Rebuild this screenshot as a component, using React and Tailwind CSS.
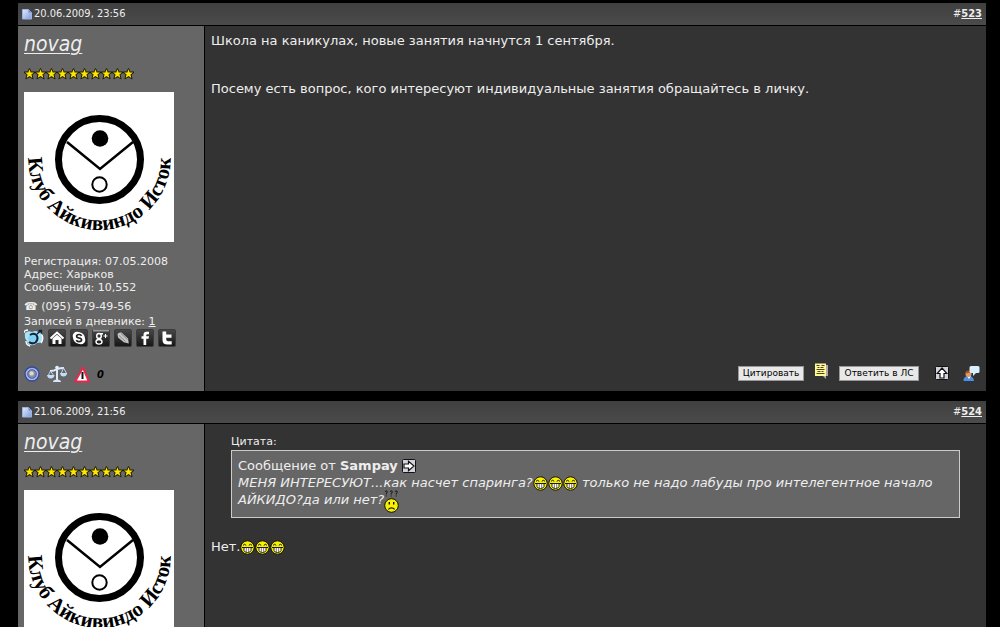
import React, { useId } from 'react';

const STARS = [0, 1, 2, 3, 4, 5, 6, 7, 8, 9];

function PageIcon() {
  const fill = useId();
  return (
    <svg width="10" height="12" viewBox="0 0 10 12" aria-hidden="true">
      <defs>
        <linearGradient id={fill} x1="0" y1="0" x2="1" y2="1">
          <stop offset="0" stopColor="#e4ecfc" />
          <stop offset="1" stopColor="#7f9bd8" />
        </linearGradient>
      </defs>
      <path d="M.5 1.500h6l3 3v6.500h-9z" fill={`url(#${fill})`} stroke="#9db2e4" />
      <path d="M6.500 1.500v3h3z" fill="#6d88cc" />
    </svg>
  );
}

function Star() {
  return (
    <svg width="11" height="12" viewBox="0 0 11 12" aria-hidden="true">
      <path d="M5.500.8L6.900 4.200h3.700L7.800 6.600l1.100 4L5.500 8.400l-3.400 2.200 1.100-4L.4 4.200h3.700z" fill="#1c1a00" stroke="#1c1a00" strokeWidth="1.200" strokeLinejoin="round" />
      <path d="M5.500 1.200L6.700 4.500h3.300L7.400 6.500l1 3.400L5.500 8 2.600 9.900l1-3.400L1 4.500h3.300z" fill="#ffe600" />
    </svg>
  );
}

function Avatar() {
  const arc = useId();
  return (
    <svg width="150" height="150" viewBox="0 0 150 150" className="overflow-visible bg-white" role="img" aria-label="Клуб Айкивиндо Исток">
      <circle cx="75.500" cy="67.500" r="41" fill="none" stroke="#000" strokeWidth="7" />
      <path d="M43 50l33 27 33-27" fill="none" stroke="#000" strokeWidth="2.500" />
      <circle cx="76" cy="46.500" r="8.300" />
      <circle cx="75.500" cy="92.500" r="7.200" fill="#fff" stroke="#000" strokeWidth="2" />
      <path id={arc} d="M4.500 67A71 71 0 0 0 146.500 67" fill="none" />
      <text fontFamily="Liberation Serif, serif" fontWeight="700" fontSize="21" fill="#000">
        <textPath href={`#${arc}`} startOffset="50%" textAnchor="middle">Клуб Айкивиндо Исток</textPath>
      </text>
    </svg>
  );
}

function GrinIcon() {
  return (
    <svg width="15" height="15" viewBox="0 0 15 15" className="inline-block align-[-4px]" role="img" aria-label="смех">
      <circle cx="7.500" cy="7.500" r="6.700" fill="#f8f000" stroke="#111" />
      <path d="M3 5.300q1.500-2 3.200 0M8.800 5.300q1.500-2 3.200 0" fill="none" stroke="#111" />
      <path d="M2 7.500h11" stroke="#111" />
      <path d="M4 7.500h7v3q-.6 2-3.500 2T4 10.500z" fill="#fff" stroke="#111" strokeWidth=".9" />
      <path d="M6.300 8v4M8.700 8v4" stroke="#555" strokeWidth=".8" />
    </svg>
  );
}

function PuzzledIcon() {
  return (
    <svg width="15" height="23" viewBox="0 0 15 23" className="-mt-2 inline-block align-[-9px]" role="img" aria-label="недоумение">
      <circle cx="7.500" cy="15.500" r="6.800" fill="#f8f000" stroke="#111" />
      <path d="M5.300 12v2.500M9.700 12v2.500" stroke="#111" strokeWidth="1.400" />
      <path d="M4.300 19.300q3.200-3 6.400 0" fill="none" stroke="#111" strokeWidth="1.100" />
      <path d="M1 1.500q2-1.500 2.300.4Q3.300 3 2.200 3.500v1M6 1.500q2-1.500 2.300.4Q8.300 3 7.200 3.500v1M11 1.500q2-1.500 2.300.4Q13.300 3 12.200 3.500v1M2.200 5.500v1M7.200 5.500v1M12.200 5.500v1" fill="none" stroke="#111" strokeWidth="1" />
    </svg>
  );
}

function ArrowBox({ up }) {
  return (
    <svg width="14" height="14" viewBox="0 0 14 14" className="inline-block align-[-3px]" aria-hidden="true">
      <rect x=".5" y=".5" width="13" height="13" rx="1" fill="#d2d2dc" stroke="#111" />
      <path d="M2 5h4.500V2.200L12 7l-5.500 4.800V9H2z" fill="#fff" stroke="#111" strokeWidth="1.200" transform={up ? 'rotate(-90 7 7)' : undefined} />
    </svg>
  );
}

function BirdIcon() {
  return (
    <svg width="20" height="18" viewBox="0 0 20 18" aria-hidden="true">
      <path d="M1 4q3-3 7-1 4-2 6 0l4 2q2 5 0 8-3 1-5 1-3 3-7 2-3-1-3-4-3-3-2-8z" fill="#a6e2f8" />
      <path d="M0 4q0-3 4-3M2 12q0 4 4 5M18 6q2 4-1 8" fill="none" stroke="#fff" strokeWidth="1.300" />
      <circle cx="9" cy="9.500" r="4.700" fill="#83d0f2" />
      <path d="M6 6q3-2.500 6.500 0 2.500 4-1 7.500Q8 15.500 5 13" fill="none" stroke="#102338" strokeWidth="2" />
      <path d="M13 5l4-3.500M14.500 1.500h3v3" fill="none" stroke="#16202c" strokeWidth="1.300" />
    </svg>
  );
}

function Tile({ children }) {
  const fill = useId();
  return (
    <svg width="18" height="18" viewBox="0 0 18 18" aria-hidden="true">
      <defs>
        <linearGradient id={fill} x1="0" y1="0" x2="0" y2="1">
          <stop offset="0" stopColor="#484848" />
          <stop offset="1" stopColor="#151515" />
        </linearGradient>
      </defs>
      <rect x=".5" y=".5" width="17" height="17" rx="1.500" fill={`url(#${fill})`} stroke="#3c3c3c" />
      {children}
    </svg>
  );
}

const CONTACTS = [
  { name: 'Дневник', icon: <BirdIcon /> },
  { name: 'Домашняя страница', icon: <Tile><path d="M2.500 9.500L9 3.500l6.500 6" fill="none" stroke="#fff" strokeWidth="2" /><path d="M4.500 9.500L9 5.800l4.500 3.700V15h-3v-4h-3v4h-3z" fill="#fff" /></Tile> },
  { name: 'Skype', icon: <Tile><circle cx="7" cy="7" r="4.300" fill="#fff" /><circle cx="11" cy="11" r="4.300" fill="#fff" /><circle cx="9" cy="9" r="5.800" fill="#fff" /><path d="M11.600 6.900Q11 5.500 9 5.500 6.600 5.500 6.600 7.200 6.600 8.600 9 9q2.600.4 2.600 2Q11.600 12.600 9 12.600q-2 0-2.700-1.500" fill="none" stroke="#222" strokeWidth="1.600" /></Tile> },
  { name: 'Google+', icon: <Tile><path d="M1 1.500h16" stroke="#999" strokeWidth="2" /><g fill="none" stroke="#fff" strokeWidth="1.400"><ellipse cx="7" cy="7" rx="2.300" ry="2.500" /><ellipse cx="7" cy="12.800" rx="3" ry="2.300" /><path d="M8 4.700h3M7 9.500l1.500 1.300" /><path d="M11.500 7h4M13.500 5v4" strokeWidth="1" /></g></Tile> },
  { name: 'Блог', icon: <Tile><path d="M3.500 5q1-2 4-1.500l6.500 6 .8 5-5-1.200L4 8.500z" fill="#c4c4c4" /><path d="M5 6.500l6.500 6M7 4.500l6.500 6" stroke="#858585" strokeWidth=".9" /></Tile> },
  { name: 'Facebook', icon: <Tile><path d="M7.500 16V9.800H5.500V7.200h2V5.800Q7.500 2.800 10.500 2.800h2.500v2.500h-1.600q-1.200 0-1.200 1v.9H13l-.4 2.600h-2.400V16z" fill="#fff" /></Tile> },
  { name: 'Twitter', icon: <Tile><path d="M4.500 2.500h3.700V5.500h5.300v3.200H8.200v1.500q0 2 2 2h3.500v3.300H9.500q-5 0-5-4.500z" fill="#fff" /></Tile> },
];

const STATUS = [
  { name: 'Не в сети', icon: (
    <svg width="16" height="16" viewBox="0 0 16 16">
      <circle cx="8" cy="8" r="7" fill="#a4b5e8" stroke="#35489b" strokeWidth="1.300" />
      <circle cx="8" cy="8" r="4.300" fill="#8b8f9a" stroke="#4a5eae" />
      <circle cx="7.600" cy="7.400" r="2.200" fill="#d9d9d5" />
    </svg>) },
  { name: 'Репутация', icon: (
    <svg width="20" height="18" viewBox="0 0 20 18">
      <path d="M10 2v13M3 6q4 0 7-2 3-1 7-1" fill="none" stroke="#dcecff" strokeWidth="2" />
      <path d="M3.500 6L1 11h6zM16.500 3L14 9h6z" fill="none" stroke="#c2d6ed" />
      <path d="M0 10h7.500q-.5 3.500-3.700 3.500T0 10zM13 8h7q-.5 3.500-3.500 3.500T13 8z" fill="#c4dcfa" />
      <path d="M6 17q0-2.500 4-2.500t4 2.500z" fill="#d5e6fb" />
      <circle cx="10" cy="2.500" r="1.800" fill="#e4efff" />
    </svg>) },
  { name: 'Нарушение', icon: (
    <svg width="16" height="17" viewBox="0 0 16 17">
      <path d="M9 1.500L14.800 15.500H1.200z" fill="#fff" stroke="#e8274a" strokeWidth="2" strokeLinejoin="round" />
      <path d="M8.500 6v7" stroke="#111" strokeWidth="2" />
    </svg>) },
];

function QuoteNoteIcon() {
  return (
    <svg width="15" height="16" viewBox="0 0 15 16" aria-hidden="true">
      <path d="M4 2h10v11h-2v3l-3-3H4z" fill="#aaa" />
      <path d="M1 .5h11v12.500H1z" fill="#fff79a" />
      <path d="M2.500 2.500h3M7.500 2.500h3M3.500 4.500h2M6.500 4.500h3M2.500 6.500h8M3.500 8.500h3M7.500 8.500h2M2.500 10.500h8" stroke="#4a4618" strokeWidth="1" />
    </svg>
  );
}

function UserTalkIcon() {
  return (
    <svg width="17" height="17" viewBox="0 0 17 17" aria-hidden="true">
      <path d="M.5 16q0-5 5-5t5.500 5z" fill="#4a90e8" />
      <path d="M4 11l2 3 2-3z" fill="#fff" />
      <circle cx="5.500" cy="9" r="3" fill="#e79a57" />
      <path d="M2.500 8.500q0-3 3-3t3 2z" fill="#a7531e" />
      <path d="M8 1h7q1.500 0 1.500 1.500v4Q16.500 8 15 8h-2l-3 3V8H8Q6.500 8 6.500 6.500v-4Q6.500 1 8 1z" fill="#d8effd" />
    </svg>
  );
}

function Sidebar({ full }) {
  return (
    <aside className="w-[187px] shrink-0 border-r border-black bg-[#666] px-1.5 text-[11px] leading-[13px]">
      <a href="#novag" className="mt-1 block font-['DejaVu_Sans_Condensed','DejaVu_Sans',sans-serif] text-[21px] leading-7 italic underline decoration-1 underline-offset-2">novag</a>
      <div className="mt-2.5 flex">{STARS.map((s) => <Star key={s} />)}</div>
      <div className="mt-3"><Avatar /></div>
      {full && (
        <>
          <div className="mt-[13px]">Регистрация: 07.05.2008</div>
          <div>Адрес: Харьков</div>
          <div>Сообщений: 10,552</div>
          <div className="mt-1.5">☎ (095) 579-49-56</div>
          <div className="mt-0.5">Записей в дневнике: <a href="#diary" className="underline">1</a></div>
          <div className="mt-px flex gap-1">
            {CONTACTS.map((c) => <a key={c.name} href="#contact" aria-label={c.name}>{c.icon}</a>)}
          </div>
          <div className="mt-[18px] mb-2 flex items-center gap-[7px]">
            {STATUS.map((s) => <span key={s.name} role="img" aria-label={s.name}>{s.icon}</span>)}
            <b className="font-['DejaVu_Sans_Condensed','DejaVu_Sans',sans-serif] text-black italic">0</b>
          </div>
        </>
      )}
    </aside>
  );
}

function Post({ date, number, full, children }) {
  return (
    <article>
      <header className="flex h-[23px] items-center border-b border-black bg-linear-to-b from-[#404040] to-[#4b4b4b] px-1 font-['DejaVu_Sans_Condensed','DejaVu_Sans',sans-serif] text-[11px]">
        <PageIcon />
        <span className="ml-0.5">{date}</span>
        <span className="ml-auto">#<a href="#post" className="font-bold underline">{number}</a></span>
      </header>
      <div className="flex">
        <Sidebar full={full} />
        {children}
      </div>
    </article>
  );
}

const BUTTON = 'h-[15px] border border-[#999] bg-[#e8e8e8] text-[9px] leading-none text-black';

export default function App() {
  return (
    <main className="flex h-screen flex-col gap-2.5 overflow-hidden bg-black pt-[3px] pr-3.5 pl-[18px] font-['DejaVu_Sans','Verdana',sans-serif] text-[13px] text-[#eee]">
      <Post date="20.06.2009, 23:56" number="523" full>
        <section className="flex flex-1 flex-col bg-[#333] px-1.5 pt-[7px]">
          <p className="leading-4">Школа на каникулах, новые занятия начнутся 1 сентября.</p>
          <p className="mt-8 leading-4">Посему есть вопрос, кого интересуют индивидуальные занятия обращайтесь в личку.</p>
          <div className="mt-auto mb-2 flex items-center justify-end">
            <button className={`${BUTTON} w-[66px]`}>Цитировать</button>
            <button aria-label="Мультицитата" className="mb-1 ml-2.5"><QuoteNoteIcon /></button>
            <button className={`${BUTTON} ml-2.5 w-20`}>Ответить в ЛС</button>
            <button aria-label="Вверх" className="ml-4"><ArrowBox up /></button>
            <button aria-label="Быстрый ответ" className="ml-3.5"><UserTalkIcon /></button>
          </div>
        </section>
      </Post>
      <Post date="21.06.2009, 21:56" number="524">
        <section className="flex-1 bg-[#333] px-1.5 pt-2.5">
          <div className="mx-5">
            <div className="text-[11px] leading-4">Цитата:</div>
            <blockquote className="border border-[#ccc] bg-[#666] px-1.5 pt-1.5 pb-1">
              <div className="leading-[17px]">Сообщение от <b>Sampay</b> <a href="#quoted" aria-label="К сообщению"><ArrowBox /></a></div>
              <p className="leading-[17px] italic">МЕНЯ ИНТЕРЕСУЮТ...как насчет спаринга?<GrinIcon /><GrinIcon /><GrinIcon /> только не надо лабуды про интелегентное начало АЙКИДО?да или нет?<PuzzledIcon /></p>
            </blockquote>
          </div>
          <p className="mt-5 leading-[18px]">Нет.<GrinIcon /><GrinIcon /><GrinIcon /></p>
        </section>
      </Post>
    </main>
  );
}
